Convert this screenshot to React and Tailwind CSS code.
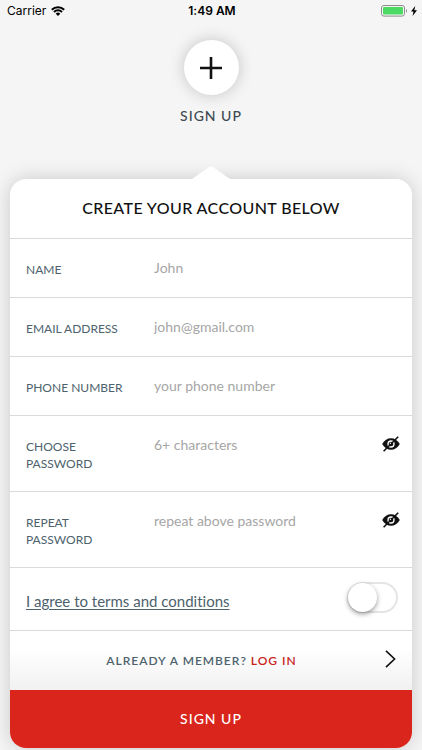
import { useState } from 'react'

const FIELDS = [
  { id: 'name',   label: 'NAME',            type: 'text',     placeholder: 'John' },
  { id: 'email',  label: 'EMAIL ADDRESS',   type: 'email',    placeholder: 'john@gmail.com' },
  { id: 'phone',  label: 'PHONE NUMBER',    type: 'tel',      placeholder: 'your phone number' },
  { id: 'pass',   label: 'CHOOSE PASSWORD', type: 'password', placeholder: '6+ characters' },
  { id: 'repeat', label: 'REPEAT PASSWORD', type: 'password', placeholder: 'repeat above password' },
]

function EyeOff() {
  return (
    <svg width="18" height="16" viewBox="0 0 18 16" fill="none">
      <path d="M0.2 8C2.4 4.2 5.4 2.2 9 2.2S15.6 4.2 17.8 8C15.6 11.8 12.6 13.8 9 13.8S2.4 11.8 0.2 8Z" fill="#111" />
      <circle cx="9" cy="8" r="3" fill="#111" stroke="#fff" strokeWidth="1.3" />
      <path d="M1.6 15.2L16.2 0.8" stroke="#111" strokeWidth="1.6" />
      <circle cx="8.4" cy="7.3" r="0.7" fill="#fff" />
    </svg>
  )
}

function StatusBar() {
  return (
    <div className="grid grid-cols-3 items-center h-[22px] pl-[7px] pr-[5px] font-['Inter',sans-serif] text-black">
      <div className="flex items-center gap-[5px] text-xs">
        Carrier
        <svg width="14" height="10" viewBox="0 0 14 10" fill="none" stroke="#000" strokeWidth="2">
          <path d="M0.8 3.7A8.8 8.8 0 0 1 13.2 3.7" />
          <path d="M3 6A5.7 5.7 0 0 1 11 6" />
          <path d="M7 10L4.7 7.7A3.3 3.3 0 0 1 9.3 7.7Z" fill="#000" stroke="none" />
        </svg>
      </div>
      <div className="text-center text-xs font-semibold">1:49 AM</div>
      <div className="flex items-center justify-end gap-[3px]">
        <svg width="27" height="12" viewBox="0 0 27 12" fill="none">
          <rect x="0.5" y="0.5" width="23" height="10.6" rx="2.4" stroke="#8c8c8c" />
          <rect x="2" y="2" width="20" height="7.6" rx="1" fill="#4cd964" />
          <path d="M25 4C26.3 4.5 26.3 7.2 25 7.7Z" fill="#8c8c8c" />
        </svg>
        <svg width="6" height="10" viewBox="0 0 6 10">
          <path d="M4.2 0L0 5.6H2.5L1.6 10L6 4.2H3.4Z" fill="#000" />
        </svg>
      </div>
    </div>
  )
}

function Field({ field }) {
  const [visible, setVisible] = useState(false)
  const isPassword = field.type === 'password'
  return (
    <div className="flex items-start border-b border-[#dadada] px-4 pt-[17px] pb-[19px]">
      <label htmlFor={field.id} className="w-32 shrink-0 pt-[5px] text-xs leading-[17px] text-[#4d626d]">
        <span className="block w-[100px]">{field.label}</span>
      </label>
      <input
        id={field.id}
        type={isPassword && visible ? 'text' : field.type}
        placeholder={field.placeholder}
        className="min-w-0 flex-1 h-[22px] text-sm text-[#333] placeholder:text-[#a6a6a6] outline-none"
      />
      {isPassword && (
        <button type="button" aria-label="Toggle password visibility" onClick={() => setVisible(v => !v)} className="h-[22px] -mr-1 flex items-center">
          <EyeOff />
        </button>
      )}
    </div>
  )
}

export default function App() {
  const [agreed, setAgreed] = useState(false)

  return (
    <div className="min-h-screen bg-[#f5f5f5] font-['Lato',sans-serif] [font-variant-ligatures:none]">
      <StatusBar />

      <div className="flex flex-col items-center pt-[18px]">
        <div className="flex items-center justify-center size-[55px] rounded-full bg-white shadow-[0_0_16px_rgba(0,0,0,0.2)]">
          <svg width="22" height="22" viewBox="0 0 22 22" stroke="#111" strokeWidth="2.6">
            <path d="M11 0V22M0 11H22" />
          </svg>
        </div>
        <div className="mt-[11px] text-sm leading-5 tracking-[1px] font-medium text-[#3d4a52]">SIGN UP</div>
        <svg className="relative z-10 mt-10" width="38" height="13" viewBox="0 0 38 13">
          <path d="M0 13L17.5 0.8Q19 0 20.5 0.8L38 13Z" fill="#fff" />
        </svg>
      </div>

      <form onSubmit={e => e.preventDefault()} className="mx-[10px] rounded-2xl bg-white shadow-[0_0_20px_rgba(0,0,0,0.18)] overflow-hidden">
        <h1 className="border-b border-[#dadada] pt-[18px] pb-5 text-center text-base leading-[21px] tracking-wide font-medium text-[#111]">
          CREATE YOUR ACCOUNT BELOW
        </h1>

        {FIELDS.map(f => <Field key={f.id} field={f} />)}

        <div className="flex items-center justify-between border-b border-[#dadada] h-[63px] pl-4 pr-[14px]">
          <label htmlFor="agree" className="pt-1 text-[15px] text-[#4d626d]">
            <a href="#terms" className="underline underline-offset-2">I agree to terms and conditions</a>
          </label>
          <input
            id="agree"
            type="checkbox"
            role="switch"
            checked={agreed}
            onChange={e => setAgreed(e.target.checked)}
            className="appearance-none flex items-center w-[51px] h-[31px] -mt-1 rounded-full border-2 border-[#e5e5e5] bg-white checked:bg-[#4cd964] before:block before:size-[29px] before:-ml-px before:rounded-full before:bg-white before:shadow-[0_2px_5px_rgba(0,0,0,0.4)] checked:before:ml-auto"
          />
        </div>

        <div className="flex items-center h-[59px] px-4 bg-linear-to-b from-white from-30% to-[#f1f1f1]">
          <div className="flex-1 pr-2 text-center text-xs tracking-[1px] font-semibold text-[#4d626d]">
            ALREADY A MEMBER? <a href="#login" className="text-[#c9211c]">LOG IN</a>
          </div>
          <a href="#login" aria-label="Log in" className="-mt-1">
            <svg width="11" height="18" viewBox="0 0 11 18" fill="none" stroke="#111" strokeWidth="1.6">
              <path d="M1 0.8L9.6 9L1 17.2" />
            </svg>
          </a>
        </div>

        <button type="submit" className="block w-full h-[58px] bg-[#da251c] text-sm tracking-[1px] font-medium text-white">
          SIGN UP
        </button>
      </form>
    </div>
  )
}
